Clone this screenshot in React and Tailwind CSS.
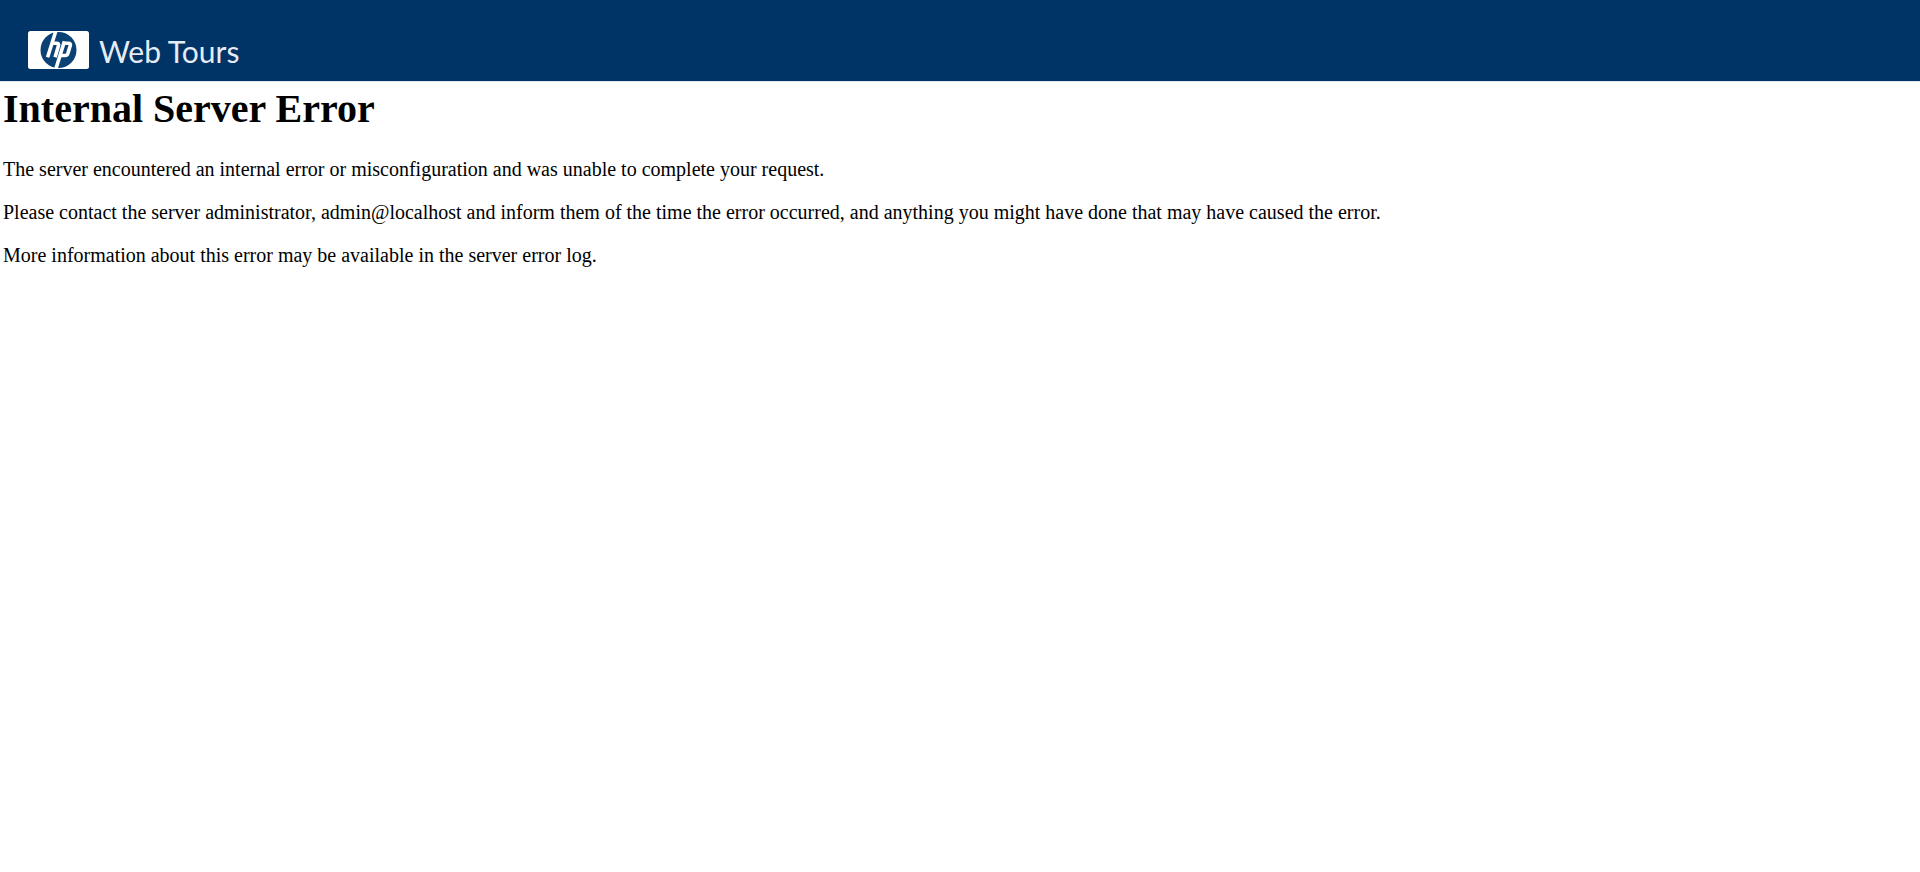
function HpLogo() {
  return (
    <svg
      role="img"
      aria-label="hp"
      viewBox="0 0 61 38"
      className="h-[38px] w-[61px] shrink-0"
    >
      <rect width="61" height="38" rx="2.5" fill="#fff" />
      <circle cx="30.5" cy="19" r="18" fill="#0a4275" />
      <g fill="none" stroke="#fff" strokeWidth="3.6">
        <path d="M28 -0.5 19.6 26.2" />
        <path d="M24 12.2h4.6q2.6 0 1.9 2.4L27.1 26.2" />
        <path d="M36.4 10.4 27.7 38.5" />
        <path d="M35.5 12.2h4.9q2.6 0 1.9 2.4l-2.4 7.8q-.7 2.1-2.7 2.1h-4.8" />
      </g>
    </svg>
  );
}

export default function App() {
  return (
    <div className="min-h-screen bg-white text-black">
      <header className="flex items-end gap-2.5 border-b border-[#e0e6ee] bg-[#003366] px-7 pt-[31px] pb-3">
        <HpLogo />
        <span className="font-['Lato',sans-serif] text-[30px] leading-9 font-normal text-[#e6ecf3]">
          Web Tours
        </span>
      </header>
      <main className="px-[3px] pt-1 font-['Liberation_Serif','Times_New_Roman',serif] text-xl leading-[23px]">
        <h1 className="mb-[26px] text-[40px] leading-[46px] font-bold">
          Internal Server Error
        </h1>
        <div className="flex flex-col gap-5">
          <p>
            The server encountered an internal error or misconfiguration and was
            unable to complete your request.
          </p>
          <p>
            Please contact the server administrator, admin@localhost and inform
            them of the time the error occurred, and anything you might have done
            that may have caused the error.
          </p>
          <p>
            More information about this error may be available in the server
            error log.
          </p>
        </div>
      </main>
    </div>
  );
}
